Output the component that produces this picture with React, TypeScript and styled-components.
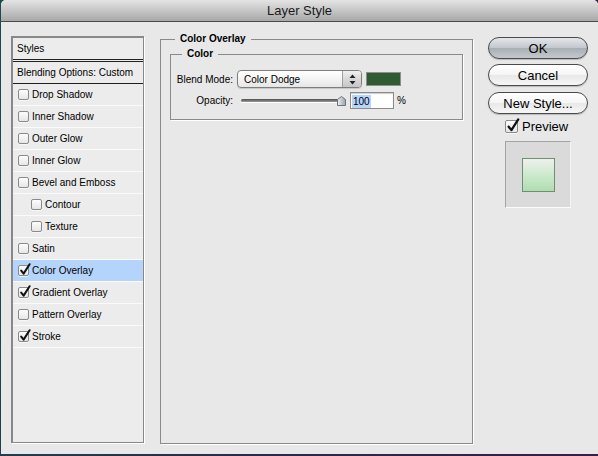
import styled, { createGlobalStyle } from "styled-components";

const Global = createGlobalStyle`
  html, body {
    margin: 0;
    padding: 0;
  }
  body {
    width: 598px;
    height: 456px;
    overflow: hidden;
    background: linear-gradient(110deg, #1c4a52, #2b2a4a 55%, #3b1d48);
    font-family: "Liberation Sans", Arial, sans-serif;
    color: #000;
  }
`;

const Window = styled.div`
  margin-left: 1px;
  width: 597px;
  height: 454px;
  background: #e8e8e8;
  border-radius: 5px 5px 0 0;
  display: flex;
  flex-direction: column;
  overflow: hidden;
`;

const TitleBar = styled.div`
  height: 21px;
  flex: none;
  border-bottom: 1px solid #4a4a4a;
  background: linear-gradient(#e4e4e4, #a8a8a8);
  display: flex;
  align-items: center;
  justify-content: center;
  font-size: 13px;
  color: #1a1a1a;
`;

const Body = styled.div`
  display: flex;
  align-items: flex-start;
  padding: 11px 0 0 10px;
`;

/* ---------- left list ---------- */

const StyleList = styled.div`
  margin-top: 3px;
  width: 133px;
  height: 407px;
  box-sizing: border-box;
  border-style: solid;
  border-color: #888;
  border-width: 2px 1px 1px 2px;
  box-shadow: 1px 1px 0 #fff;
  background: #ececec;
  display: flex;
  flex-direction: column;
`;

const HeaderRow = styled.div<{ $double?: boolean }>`
  height: ${(p) => (p.$double ? 24 : 22)}px;
  box-sizing: border-box;
  padding-left: 4px;
  display: flex;
  align-items: center;
  font-size: 10px;
  border-bottom: ${(p) => (p.$double ? "3px double #222" : "1px solid #1e1e1e")};
`;

const ListRow = styled.div<{ $indent?: boolean; $selected?: boolean }>`
  height: 22px;
  box-sizing: border-box;
  padding-left: ${(p) => (p.$indent ? 18 : 5)}px;
  display: flex;
  align-items: center;
  gap: 3px;
  font-size: 10px;
  border-bottom: 1px solid #fafafa;
  background: ${(p) => (p.$selected ? "#b5d4fc" : "transparent")};
`;

const Box = styled.span<{ $size: number }>`
  position: relative;
  flex: none;
  width: ${(p) => p.$size}px;
  height: ${(p) => p.$size}px;
  box-sizing: border-box;
  border: 1px solid #8a8a8a;
  border-radius: 2px;
  background: linear-gradient(#fdfdfd, #e6e6e6);
  box-shadow: 0 1px 0 rgba(255, 255, 255, 0.6);
  svg {
    position: absolute;
    left: 0;
    top: -3px;
  }
`;

const CheckBox = ({ checked, size = 11 }: { checked?: boolean; size?: number }) => (
  <Box $size={size}>
    {checked && (
      <svg width={size + 1} height={size + 3} viewBox="0 0 12 14">
        <path
          d="M2.2 7.6 L4.6 10.6 L10.6 1.2"
          fill="none"
          stroke="#111"
          strokeWidth={2}
          strokeLinecap="round"
          strokeLinejoin="round"
        />
      </svg>
    )}
  </Box>
);

/* ---------- centre group ---------- */

const Group = styled.fieldset<{ $h: number; $inner?: boolean }>`
  margin: ${(p) => (p.$inner ? "3px 0 0 0" : "0 0 0 16px")};
  padding: ${(p) => (p.$inner ? "0 6px" : "0 9px")};
  width: ${(p) => (p.$inner ? 293 : 313)}px;
  height: ${(p) => p.$h}px;
  box-sizing: border-box;
  min-width: 0;
  border: 1px solid #8a8a8a;
  box-shadow: 1px 1px 0 #fff;
`;

const Legend = styled.legend`
  margin-left: 5px;
  padding: 0 5px;
  font-size: 10px;
  font-weight: bold;
  line-height: 12px;
`;

const Form = styled.div`
  margin-top: 10px;
  display: grid;
  grid-template-columns: 56px auto;
  grid-template-rows: 18px 17px;
  column-gap: 4px;
  row-gap: 4px;
  align-items: center;
`;

const Label = styled.span`
  font-size: 10px;
  white-space: nowrap;
  display: flex;
  justify-content: flex-end;
`;

const Line = styled.div`
  display: flex;
  align-items: center;
`;

const Select = styled.div`
  width: 125px;
  height: 18px;
  box-sizing: border-box;
  border: 1px solid #7e7e7e;
  border-radius: 4px;
  background: linear-gradient(#ffffff, #f4f4f4 50%, #e6e6e6);
  box-shadow: 0 1px 1px rgba(0, 0, 0, 0.15);
  display: flex;
  overflow: hidden;
  font-size: 10px;
`;

const SelectText = styled.span`
  flex: 1;
  padding-left: 6px;
  display: flex;
  align-items: center;
`;

const SelectArrows = styled.span`
  width: 18px;
  border-left: 1px solid #a0a0a0;
  background: linear-gradient(#f0f0f0, #d8d8d8 50%, #c6c6c6);
  display: flex;
  align-items: center;
  justify-content: center;
`;

const Swatch = styled.span`
  margin-left: 4px;
  width: 35px;
  height: 14px;
  box-sizing: border-box;
  border: 1px solid #8d8d8d;
  background: #2f5a32;
`;

const Slider = styled.div`
  position: relative;
  margin-left: 4px;
  width: 105px;
  height: 12px;
  display: flex;
  align-items: center;
`;

const Track = styled.span`
  width: 100px;
  height: 3px;
  border-radius: 2px;
  background: linear-gradient(#4c4c4c, #9a9a9a);
  box-shadow: 0 1px 0 #fff;
`;

const Thumb = styled.svg`
  position: absolute;
  left: 96px;
  top: 1px;
`;

const NumberInput = styled.span`
  margin-left: 4px;
  width: 44px;
  height: 17px;
  box-sizing: border-box;
  border: 1px solid #8b8b8b;
  box-shadow: inset 0 1px 1px rgba(0, 0, 0, 0.2);
  background: #fff;
  padding: 1px 0 0 1px;
  font-size: 10px;
  display: flex;
  align-items: center;
`;

const Selection = styled.span`
  background: #b5d5ff;
  padding: 1px 1px;
`;

const Unit = styled.span`
  margin-left: 3px;
  font-size: 10px;
`;

/* ---------- right column ---------- */

const Side = styled.div`
  margin: 4px 0 0 15px;
  width: 100px;
  display: flex;
  flex-direction: column;
`;

const Button = styled.div<{ $default?: boolean; $gap?: number }>`
  margin-top: ${(p) => p.$gap ?? 0}px;
  height: 22px;
  box-sizing: border-box;
  border: 1px solid #4a4a4a;
  border-radius: 11px;
  background: ${(p) =>
    p.$default
      ? "linear-gradient(#e3e6ea, #c3c7cd 50%, #a9aeb5 51%, #c4c8ce)"
      : "linear-gradient(#ffffff, #f5f5f5 50%, #e8e8e8 51%, #f6f6f6)"};
  box-shadow: 0 1px 1px rgba(0, 0, 0, 0.2);
  display: flex;
  align-items: center;
  justify-content: center;
  font-size: 13px;
`;

const PreviewRow = styled.div`
  margin: 6px 0 0 17px;
  display: flex;
  align-items: center;
  gap: 4px;
  font-size: 13px;
  height: 13px;
`;

const PreviewFrame = styled.div`
  margin: 8px 0 0 17px;
  width: 66px;
  height: 67px;
  box-sizing: border-box;
  background: #dadada;
  border-style: solid;
  border-width: 1px;
  border-color: #a4a4a4 #f4f4f4 #fbfbfb #a4a4a4;
  display: flex;
  align-items: center;
  justify-content: center;
`;

const PreviewSwatch = styled.div`
  width: 33px;
  height: 34px;
  box-sizing: border-box;
  border: 1px solid #6f8f70;
  background: linear-gradient(#eef0ee, #c6e8c6 60%, #b0dcb1);
`;

const styles: { name: string; checked?: boolean; indent?: boolean; selected?: boolean }[] = [
  { name: "Drop Shadow" },
  { name: "Inner Shadow" },
  { name: "Outer Glow" },
  { name: "Inner Glow" },
  { name: "Bevel and Emboss" },
  { name: "Contour", indent: true },
  { name: "Texture", indent: true },
  { name: "Satin" },
  { name: "Color Overlay", checked: true, selected: true },
  { name: "Gradient Overlay", checked: true },
  { name: "Pattern Overlay" },
  { name: "Stroke", checked: true },
];

const App = () => {
  return (
    <>
      <Global />
      <Window>
        <TitleBar>Layer Style</TitleBar>
        <Body>
          <StyleList>
            <HeaderRow $double>Styles</HeaderRow>
            <HeaderRow>Blending Options: Custom</HeaderRow>
            {styles.map((s) => (
              <ListRow key={s.name} $indent={s.indent} $selected={s.selected}>
                <CheckBox checked={s.checked} />
                {s.name}
              </ListRow>
            ))}
          </StyleList>

          <Group $h={411}>
            <Legend>Color Overlay</Legend>
            <Group $inner $h={72}>
              <Legend>Color</Legend>
              <Form>
                <Label>Blend Mode:</Label>
                <Line>
                  <Select>
                    <SelectText>Color Dodge</SelectText>
                    <SelectArrows>
                      <svg width="7" height="11" viewBox="0 0 7 11">
                        <path d="M3.5 0.5 L6.5 4 L0.5 4 Z" fill="#222" />
                        <path d="M3.5 10.5 L6.5 7 L0.5 7 Z" fill="#222" />
                      </svg>
                    </SelectArrows>
                  </Select>
                  <Swatch />
                </Line>
                <Label>Opacity:</Label>
                <Line>
                  <Slider>
                    <Track />
                    <Thumb width="9" height="10" viewBox="0 0 9 10">
                      <defs>
                        <linearGradient id="thumb" x1="0" y1="0" x2="1" y2="0">
                          <stop offset="0" stopColor="#eef0f3" />
                          <stop offset="1" stopColor="#9ca3ab" />
                        </linearGradient>
                      </defs>
                      <path
                        d="M4.5 0.5 L8.5 3.5 L8.5 9.5 L0.5 9.5 L0.5 3.5 Z"
                        fill="url(#thumb)"
                        stroke="#6d737a"
                      />
                    </Thumb>
                  </Slider>
                  <NumberInput>
                    <Selection>100</Selection>
                  </NumberInput>
                  <Unit>%</Unit>
                </Line>
              </Form>
            </Group>
          </Group>

          <Side>
            <Button $default>OK</Button>
            <Button $gap={5}>Cancel</Button>
            <Button $gap={6}>New Style...</Button>
            <PreviewRow>
              <CheckBox checked size={13} />
              Preview
            </PreviewRow>
            <PreviewFrame>
              <PreviewSwatch />
            </PreviewFrame>
          </Side>
        </Body>
      </Window>
    </>
  );
};

export default App;
